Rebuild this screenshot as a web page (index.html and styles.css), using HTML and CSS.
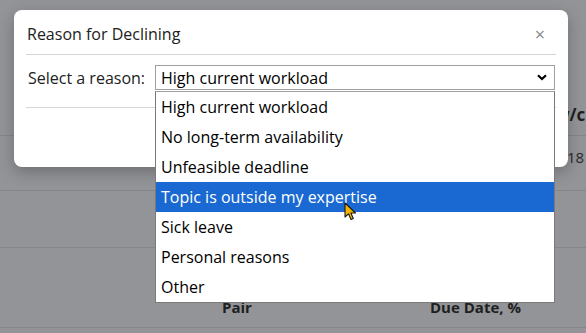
FILE: index.html
```html
<!DOCTYPE html>
<html lang="en">
<head>
  <meta charset="UTF-8" />
  <meta name="viewport" content="width=device-width, initial-scale=1.0"/>
  <title>Reason for Declining</title>
  <link rel="stylesheet" href="styles.css">
</head>
<body>
  <div class="page">
    <!-- table behind the backdrop -->
    <div class="bg-row bg-head">
      <span class="bg-col-right bold">w/c</span>
    </div>
    <div class="bg-row bg-data">
      <span class="bg-col-right">18</span>
    </div>
    <div class="bg-row bg-empty"></div>
    <div class="bg-row bg-thead">
      <span class="bold">Pair</span>
      <span class="bold">Due Date, %</span>
    </div>

    <div class="modal">
      <div class="modal-header">
        <h4 class="modal-title">Reason for Declining</h4>
        <span class="close">&times;</span>
      </div>
      <div class="modal-body">
        <label class="reason-label">Select a reason:</label>
        <div class="select-wrap">
          <div class="select-box">
            <span>High current workload</span>
            <svg class="chevron" width="10" height="7" viewBox="0 0 10 7">
              <path d="M1 1.2 L5 5 L9 1.2" fill="none" stroke="#000" stroke-width="2.2"/>
            </svg>
          </div>
          <ul class="options">
            <li>High current workload</li>
            <li>No long-term availability</li>
            <li>Unfeasible deadline</li>
            <li class="active">Topic is outside my expertise</li>
            <li>Sick leave</li>
            <li>Personal reasons</li>
            <li>Other</li>
          </ul>
        </div>
      </div>
    </div>

    <svg class="cursor" width="14" height="20" viewBox="0 0 14 20">
      <path d="M1 1 L1 15 L4.5 11.8 L7 17.5 L9.3 16.5 L6.9 11 L11.5 11 Z" fill="#f4b400" stroke="#1a1a1a" stroke-width="1.1" stroke-linejoin="round"/>
    </svg>
  </div>
</body>
</html>
```

FILE: styles.css
```css
* {
  box-sizing: border-box;
}

body {
  margin: 0;
  font-family: 'Open Sans', 'Noto Sans', sans-serif;
  overflow: hidden;
}

.page {
  position: relative;
  width: 586px;
  height: 333px;
  background: #939498;
  color: #1f1f1f;
  font-size: 14px;
}

.bg-row {
  border-bottom: 1px solid #848589;
}

.bold {
  font-weight: 700;
}

.bg-head {
  height: 136px;
  padding: 103px 0 0 555px;
  font-size: 17px;
  white-space: nowrap;
}

.bg-data {
  height: 55px;
  padding: 11px 0 0 567px;
  color: #2a2a2a;
  font-size: 15px;
}

.bg-empty {
  height: 57px;
}

.bg-thead {
  height: 80px;
  display: grid;
  grid-template-columns: 208px 1fr;
  padding: 49px 0 0 222px;
  font-size: 15px;
}

.modal {
  position: absolute;
  left: 14px;
  top: 10px;
  width: 554px;
  height: 157px;
  background: #fff;
  border-radius: 8px;
  box-shadow: 0 5px 15px rgba(0, 0, 0, 0.25);
  padding: 0 12px;
  color: #212121;
}

.modal-header {
  height: 45px;
  display: flex;
  align-items: center;
  justify-content: space-between;
  padding: 3px 1px 0;
  border-bottom: 1px solid #d6d6d6;
}

.modal-title {
  margin: 0;
  font-size: 16px;
  font-weight: 400;
}

.close {
  color: #8a8a8a;
  font-size: 18px;
  margin-right: 10px;
  line-height: 1;
}

.modal-body {
  display: flex;
  align-items: center;
  padding: 10px 1px 17px 2px;
  border-bottom: 1px solid #d6d6d6;
}

.reason-label {
  width: 127px;
  font-size: 16px;
}

.select-wrap {
  position: relative;
  width: 400px;
}

.select-box {
  height: 25px;
  display: flex;
  align-items: center;
  justify-content: space-between;
  padding: 0 7px 0 5px;
  border: 1px solid #a0a0a0;
  font-size: 16px;
  color: #000;
}

.options {
  position: absolute;
  left: 0;
  top: 26px;
  width: 400px;
  margin: 0;
  padding: 0;
  list-style: none;
  background: #fff;
  border: 1px solid #7a7a7a;
  border-top-color: #a0a0a0;
  font-size: 16px;
  color: #000;
}

.options li {
  height: 30px;
  line-height: 30px;
  padding-left: 5px;
}

.options li.active {
  background: #1a69d2;
  color: #fff;
}

.cursor {
  position: absolute;
  left: 344px;
  top: 202px;
}
```
